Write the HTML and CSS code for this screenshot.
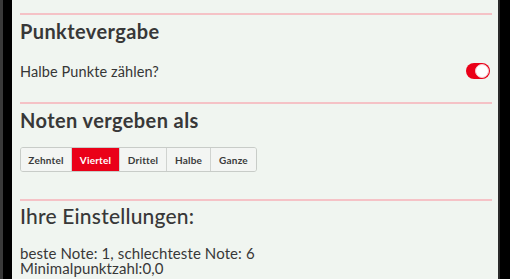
FILE: index.html
```html
<!DOCTYPE html>
<html lang="de">
<head>
<meta charset="utf-8">
<link rel="stylesheet" href="styles.css">
</head>
<body>
<div class="frame">
  <div class="edge-left"></div>
  <main class="content">
    <section class="section first">
      <h2 class="title">Punktevergabe</h2>
      <div class="row">
        <span class="label">Halbe Punkte zählen?</span>
        <span class="toggle"><span class="knob"></span></span>
      </div>
    </section>
    <section class="section second">
      <h2 class="title">Noten vergeben als</h2>
      <div class="segments">
        <button class="seg">Zehntel</button>
        <button class="seg active">Viertel</button>
        <button class="seg">Drittel</button>
        <button class="seg">Halbe</button>
        <button class="seg">Ganze</button>
      </div>
    </section>
    <section class="section third">
      <h2 class="title light">Ihre Einstellungen:</h2>
      <p class="info">beste Note: 1, schlechteste Note: 6<br>Minimalpunktzahl:0,0</p>
    </section>
  </main>
  <div class="edge-right"></div>
</div>
</body>
</html>
```
FILE: styles.css
```css
html, body {
  margin: 0;
  padding: 0;
  height: 100%;
  background: #000;
  overflow: hidden;
}
.frame {
  display: flex;
  height: 279px;
  width: 510px;
  overflow: hidden;
}
.edge-left {
  width: 3px;
  background: #3a3a3a;
  margin-right: 9px;
}
.content {
  width: 486px;
  height: 279px;
  background: #f0f5f0;
  padding: 13px 6px 0 8px;
  box-sizing: border-box;
  font-family: Lato, "Open Sans", sans-serif;
  color: #363636;
  overflow: hidden;
}
.edge-right {
  width: 2px;
  background: #2a2a2a;
}
.section {
  border-top: 2px solid #f5c2c6;
  box-sizing: border-box;
}
.first { height: 89px; }
.second { height: 97px; }
.title {
  margin: 0;
  font-size: 20px;
  font-weight: 700;
  line-height: 24px;
  padding-top: 4px;
  letter-spacing: 0.4px;
  color: #383838;
}
.title.light {
  font-weight: 500;
  font-size: 21px;
  line-height: 26px;
  padding-top: 2px;
  letter-spacing: 0.2px;
}
.row {
  display: flex;
  align-items: center;
  justify-content: space-between;
  height: 24px;
  margin-top: 16px;
  padding-right: 2px;
}
.label {
  font-size: 14.5px;
  letter-spacing: 0.1px;
}
.toggle {
  width: 24px;
  height: 16px;
  border-radius: 8px;
  background: #ea0018;
  position: relative;
  box-sizing: border-box;
}
.knob {
  position: absolute;
  right: 1px;
  top: 1px;
  width: 14px;
  height: 14px;
  border-radius: 50%;
  background: #fff;
  box-sizing: border-box;
  border: 1px solid #f7c8cc;
}
.segments {
  display: flex;
  margin-top: 15px;
  width: 237px;
  height: 25px;
  border: 1px solid #c8ccc8;
  border-radius: 3px;
  overflow: hidden;
  box-sizing: border-box;
}
.seg {
  font-family: Lato, sans-serif;
  font-size: 10px;
  font-weight: 700;
  color: #3a3a3a;
  background: #f3f5f3;
  border: 0;
  border-right: 1px solid #d0d3d0;
  padding: 0;
  margin: 0;
  height: 100%;
  letter-spacing: 0.2px;
}
.seg:nth-child(1) { width: 51px; }
.seg:nth-child(2) { width: 48px; }
.seg:nth-child(3) { width: 47px; }
.seg:nth-child(4) { width: 44px; }
.seg:nth-child(5) { width: 45px; border-right: 0; }
.seg.active {
  background: #ea0018;
  color: #fff;
}
.info {
  margin: 17px 0 0;
  font-size: 15px;
  line-height: 15px;
  color: #383838;
  letter-spacing: 0.1px;
}
```
